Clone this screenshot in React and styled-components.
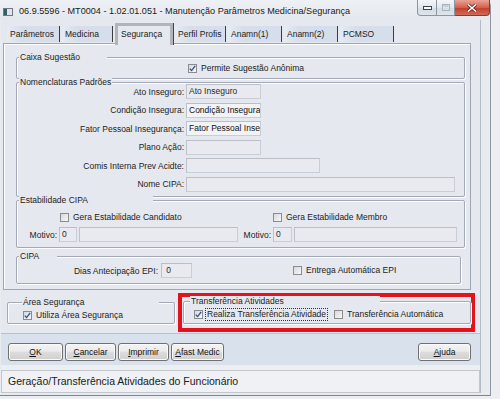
import React from 'react';
import styled, { createGlobalStyle } from 'styled-components';

const FONT = '"Liberation Sans", Arial, sans-serif';
const PANEL = '#e5e8ee';
const TEXT = '#1c1c1c';
const FS = '8.5px';

const Global = createGlobalStyle`
  html, body { margin: 0; padding: 0; }
  body {
    width: 500px; height: 399px; overflow: hidden;
    background: #eceef1;
    font-family: ${FONT};
  }
`;

const Window = styled.div`
  width: 491px;
  height: 396px;
  box-sizing: border-box;
  display: flex;
  flex-direction: column;
  background: #e8ecf1;
  border-right: 1px solid #8d96a2;
  border-bottom: 1px solid #7c8590;
  border-top-right-radius: 6px;
`;

const TitleBar = styled.div`
  height: 20px;
  flex-shrink: 0;
  display: flex;
  align-items: flex-start;
  background: linear-gradient(#eef1f5, #e3e8ee);
`;

const AppIcon = styled.svg`
  flex-shrink: 0;
  margin: 8px 0 0 3px;
`;

const TitleText = styled.div`
  margin: 6px 0 0 6px;
  font: 9.1px/11px ${FONT};
  color: #1a1a1a;
  white-space: nowrap;
`;

const Caption = styled.div`
  margin-left: auto;
  display: flex;
  height: 16px;
`;

const CapBtn = styled.div`
  width: ${p => p.$w}px;
  height: 16px;
  box-sizing: border-box;
  display: flex;
  align-items: center;
  justify-content: center;
  border: 1px solid ${p => (p.$close ? '#8a3a30' : '#8c96a3')};
  border-top: none;
  border-left-width: ${p => (p.$first ? 1 : 0)}px;
  border-bottom-left-radius: ${p => (p.$first ? 4 : 0)}px;
  border-bottom-right-radius: ${p => (p.$close ? 4 : 0)}px;
  background: ${p =>
    p.$close
      ? 'linear-gradient(#e9a395, #d4614d 50%, #c4402d 55%, #d06a55)'
      : 'linear-gradient(#f4f6f9, #e2e7ee 50%, #d5dce6 55%, #e0e5ec)'};
`;

const Client = styled.div`
  flex: 1;
  margin: 0 9px 2px 1px;
  display: flex;
  flex-direction: column;
  background: ${PANEL};
  border-right: 1px solid #b3bbc6;
`;

const TabStrip = styled.div`
  height: 23px;
  flex-shrink: 0;
  display: flex;
  align-items: flex-end;
  gap: 2px;
  padding-left: 6px;
  position: relative;
  z-index: 2;
`;

const Tab = styled.div`
  width: ${p => p.$w}px;
  box-sizing: border-box;
  height: ${p => (p.$active ? 22 : 16)}px;
  margin-bottom: ${p => (p.$active ? -2 : 1)}px;
  padding-left: 3px;
  font-size: ${FS};
  line-height: 16px;
  color: ${TEXT};
  white-space: nowrap;
  background: ${p => (p.$active ? PANEL : 'linear-gradient(90deg, #e6ebf3, #d6deeb 30%)')};
  border-right: 1px solid #3d3d3d;
  ${p =>
    p.$active &&
    `
    border: 3px solid #b1b5bb;
    border-bottom: none;
    box-shadow: 1px 0 0 #444;
  `}
`;

const TabPage = styled.div`
  height: 247px;
  flex-shrink: 0;
  box-sizing: border-box;
  margin: 0 9px 0 2px;
  padding: 0 5px 0 12px;
  border: 1px solid #9ea6b2;
  box-shadow: inset 1px 1px 0 #fbfcfd;
  display: flex;
  flex-direction: column;
`;

const Group = styled.div`
  position: relative;
  flex-shrink: 0;
  box-sizing: border-box;
  margin: ${p => p.$mt || 0}px ${p => p.$mr || 0}px 0 ${p => p.$ml || 0}px;
  ${p => (p.$w ? `width: ${p.$w}px;` : '')}
  height: ${p => p.$h}px;
  border: 1px solid #a3aab5;
  border-radius: 2px;
  box-shadow: inset 1px 1px 0 #fbfcfe, 1px 1px 0 #fbfcfe;
`;

const GroupTitle = styled.span`
  position: absolute;
  top: -6px;
  left: ${p => p.$x}px;
  width: ${p => p.$w}px;
  height: 11px;
  box-sizing: border-box;
  padding-left: 1px;
  background: ${PANEL};
  font-size: ${FS};
  line-height: 11px;
  color: ${TEXT};
  white-space: nowrap;
`;

const CheckRow = styled.div`
  display: flex;
  align-items: center;
  height: ${p => p.$h || 20}px;
  padding-left: ${p => p.$pl || 0}px;
  padding-top: ${p => p.$pt || 0}px;
  padding-bottom: ${p => p.$pb || 0}px;
  gap: ${p => p.$gap || 0}px;
`;

const CheckItem = styled.label`
  display: inline-flex;
  align-items: center;
  gap: 3px;
  font-size: ${FS};
  color: ${TEXT};
  white-space: nowrap;
  margin-left: ${p => p.$ml || 0}px;
  grid-column: ${p => p.$col || 'auto'};
`;

const BoxMark = styled.span`
  width: 9px;
  height: 9px;
  flex-shrink: 0;
  box-sizing: border-box;
  border: 1px solid #8b8c8e;
  background: linear-gradient(135deg, #d6d8db, #f7f8f9);
  display: inline-flex;
  align-items: center;
  justify-content: center;
`;

const FocusText = styled.span`
  outline: ${p => (p.$focus ? '1px dotted #333' : 'none')};
  outline-offset: 0px;
  padding: 0 1px;
  line-height: 11px;
`;

const Check = ({ checked, children, ml, col, focus }) => (
  <CheckItem $ml={ml} $col={col}>
    <BoxMark>
      {checked && (
        <svg width="7" height="7" viewBox="0 0 7 7">
          <path d="M0.8 3.6 L2.6 5.6 L6.2 0.9" fill="none" stroke="#2b4e92" strokeWidth="1.3" />
        </svg>
      )}
    </BoxMark>
    <FocusText $focus={focus}>{children}</FocusText>
  </CheckItem>
);

const FormGrid = styled.div`
  display: grid;
  grid-template-columns: 167px auto;
  grid-auto-rows: 15px;
  row-gap: 3.6px;
  column-gap: 2px;
  padding-top: 1px;
`;

const Label = styled.span`
  font-size: ${FS};
  color: ${TEXT};
  text-align: right;
  white-space: nowrap;
  align-self: center;
  ${p => (p.$w ? `width: ${p.$w}px; flex-shrink: 0;` : '')}
  margin-right: ${p => p.$mr || 0}px;
`;

const Field = styled.div`
  width: ${p => p.$w}px;
  height: 15px;
  flex-shrink: 0;
  box-sizing: border-box;
  border: 1px solid #c9cdd5;
  border-top-color: #b9bec7;
  border-left-color: #bdc2ca;
  background: ${p => (p.$bright ? '#f2f3f6' : '#e8eaef')};
  font-size: ${FS};
  line-height: 13px;
  color: ${p => (p.$bright ? '#111' : '#2a2a2a')};
  padding-left: 2px;
  overflow: hidden;
  white-space: nowrap;
`;

const EstabGrid = styled.div`
  display: grid;
  grid-template-columns: 40px 18px 159px 31px 19px 163px;
  grid-template-rows: 9px 15px;
  column-gap: 2px;
  row-gap: 5px;
  padding-top: 12px;
`;

const CipaRow = styled.div`
  display: flex;
  align-items: center;
  padding-top: 6px;
`;

const BottomArea = styled.div`
  height: 43px;
  flex-shrink: 0;
  display: flex;
  align-items: flex-start;
`;

const Highlight = styled.div`
  width: 297px;
  height: 39px;
  box-sizing: border-box;
  margin: 3px 0 0 3px;
  border: 4px solid #e3121d;
  display: flex;
  align-items: flex-start;
`;

const ButtonBar = styled.div`
  height: 32px;
  flex-shrink: 0;
  box-sizing: border-box;
  display: flex;
  align-items: flex-start;
  gap: 2px;
  padding: 9px 9px 0 7px;
  background: #d9e1ed;
  border-top: 1px solid #b8c0cc;
`;

const Btn = styled.button`
  width: ${p => p.$w}px;
  height: 18px;
  padding: 0;
  margin-left: ${p => (p.$right ? 'auto' : '0')};
  box-sizing: border-box;
  border: 1px solid #707070;
  border-radius: 3px;
  background: linear-gradient(#f3f3f3, #ebebeb 45%, #dddddd 50%, #cfcfcf);
  box-shadow: inset 0 0 0 1px #fafafa;
  font: ${FS} ${FONT};
  color: #111;
  u { text-decoration: underline; }
`;

const Strip = styled.div`
  height: 5px;
  flex-shrink: 0;
  background: #eceef2;
`;

const StatusBar = styled.div`
  height: 23px;
  flex-shrink: 0;
  box-sizing: border-box;
  border: 1px solid #c2c7ce;
  background: #eff1f4;
  padding-left: 6px;
  font: 10.5px/21px ${FONT};
  color: #202020;
  white-space: nowrap;
`;

const tabs = [
  { t: 'Parâmetros', w: 53 },
  { t: 'Medicina', w: 51 },
  { t: 'Segurança', w: 58, active: true },
  { t: 'Perfil Profis', w: 51 },
  { t: 'Anamn(1)', w: 54 },
  { t: 'Anamn(2)', w: 54 },
  { t: 'PCMSO', w: 54 },
];

const nomen = [
  { l: 'Ato Inseguro:', v: 'Ato Inseguro', w: 75 },
  { l: 'Condição Insegura:', v: 'Condição Insegura', w: 75, bright: true },
  { l: 'Fator Pessoal Insegurança:', v: 'Fator Pessoal Insegurança', w: 75, bright: true },
  { l: 'Plano Ação:', v: '', w: 75 },
  { l: 'Comis Interna Prev Acidte:', v: '', w: 134 },
  { l: 'Nome CIPA:', v: '', w: 269 },
];

export default function App() {
  return (
    <>
      <Global />
      <Window>
        <TitleBar>
          <AppIcon width="10" height="8" viewBox="0 0 10 8">
            <rect x="0.5" y="0.5" width="9" height="7" fill="#dfe4ea" stroke="#6f7a86" />
            <rect x="1" y="1" width="3" height="6" fill="#2f5f6a" />
          </AppIcon>
          <TitleText>06.9.5596 - MT0004 - 1.02.01.051 - Manutenção Parâmetros Medicina/Segurança</TitleText>
          <Caption>
            <CapBtn $w={20} $first>
              <svg width="9" height="4" viewBox="0 0 9 4">
                <rect x="0.5" y="0.5" width="8" height="3" fill="#fff" stroke="#3b4450" />
              </svg>
            </CapBtn>
            <CapBtn $w={18}>
              <svg width="8" height="7" viewBox="0 0 8 7">
                <rect x="0.5" y="0.5" width="7" height="6" fill="none" stroke="#a9b1bb" />
                <rect x="1.5" y="1.5" width="5" height="1" fill="#a9b1bb" />
              </svg>
            </CapBtn>
            <CapBtn $w={35} $close>
              <svg width="10" height="8" viewBox="0 0 10 8">
                <path d="M1 0.5 L9 7.5 M9 0.5 L1 7.5" stroke="#5a1d15" strokeWidth="3" />
                <path d="M1 0.5 L9 7.5 M9 0.5 L1 7.5" stroke="#fff" strokeWidth="1.6" />
              </svg>
            </CapBtn>
          </Caption>
        </TitleBar>

        <Client>
          <TabStrip>
            {tabs.map(t => (
              <Tab key={t.t} $w={t.w} $active={t.active}>
                {t.t}
              </Tab>
            ))}
          </TabStrip>

          <TabPage>
            <Group $mt={13} $h={22}>
              <GroupTitle $x={2} $w={88}>Caixa Sugestão</GroupTitle>
              <CheckRow $pl={171} $pb={2}>
                <Check checked>Permite Sugestão Anônima</Check>
              </CheckRow>
            </Group>

            <Group $mt={3} $h={115}>
              <GroupTitle $x={2} $w={93}>Nomenclaturas Padrões</GroupTitle>
              <FormGrid>
                {nomen.map(r => (
                  <React.Fragment key={r.l}>
                    <Label>{r.l}</Label>
                    <Field $w={r.w} $bright={r.bright}>{r.v}</Field>
                  </React.Fragment>
                ))}
              </FormGrid>
            </Group>

            <Group $mt={3} $h={48}>
              <GroupTitle $x={2} $w={134}>Estabilidade CIPA</GroupTitle>
              <EstabGrid>
                <Check col="2 / span 2" ml={1}>Gera Estabilidade Candidato</Check>
                <Check col="5 / span 2">Gera Estabilidade Membro</Check>
                <Label>Motivo:</Label>
                <Field $w={18}>0</Field>
                <Field $w={159} />
                <Label>Motivo:</Label>
                <Field $w={19}>0</Field>
                <Field $w={163} />
              </EstabGrid>
            </Group>

            <Group $mt={8} $mr={4} $h={28}>
              <GroupTitle $x={2} $w={38}>CIPA</GroupTitle>
              <CipaRow>
                <Label $w={141} $mr={3}>Dias Antecipação EPI:</Label>
                <Field $w={31}>&nbsp;0</Field>
                <Check ml={101}>Entrega Automática EPI</Check>
              </CipaRow>
            </Group>
          </TabPage>

          <BottomArea>
            <Group $mt={12} $ml={6} $w={168} $h={22}>
              <GroupTitle $x={14} $w={137}>Área Segurança</GroupTitle>
              <CheckRow $h={10} $pt={7} $pl={15}>
                <Check checked>Utiliza Área Segurança</Check>
              </CheckRow>
            </Group>
            <Highlight>
              <Group $mt={4} $ml={1} $w={288} $h={23}>
                <GroupTitle $x={6} $w={190}>Transferência Atividades</GroupTitle>
                <CheckRow $h={10} $pt={7} $pl={10} $gap={7}>
                  <Check checked focus>Realiza Transferência Atividade</Check>
                  <Check>Transferência Automática</Check>
                </CheckRow>
              </Group>
            </Highlight>
          </BottomArea>

          <ButtonBar>
            <Btn $w={55}><u>O</u>K</Btn>
            <Btn $w={51}><u>C</u>ancelar</Btn>
            <Btn $w={51}><u>I</u>mprimir</Btn>
            <Btn $w={53}><u>A</u>fast Medic</Btn>
            <Btn $w={53} $right><u>A</u>juda</Btn>
          </ButtonBar>
          <Strip />
          <StatusBar>Geração/Transferência Atividades do Funcionário</StatusBar>
        </Client>
      </Window>
    </>
  );
}
